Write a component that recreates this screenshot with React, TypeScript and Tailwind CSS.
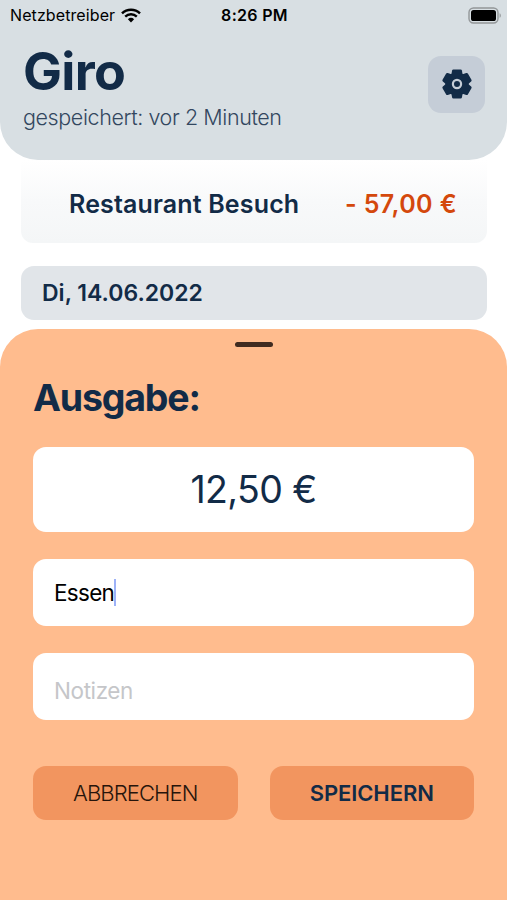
import { ReactNode } from "react";

const WifiIcon = () => (
  <svg width="20" height="15" viewBox="0 0 20 15" fill="none">
    <path d="M1 5.3a13 13 0 0 1 18 0" stroke="#000" strokeWidth="2.5" />
    <path d="M4.2 8.6a8.4 8.4 0 0 1 11.6 0" stroke="#000" strokeWidth="2.4" />
    <path d="M10 14.4 6.9 11.3a4.5 4.5 0 0 1 6.2 0Z" fill="#000" />
  </svg>
);

const BatteryIcon = () => (
  <svg width="34" height="17" viewBox="0 0 34 17" fill="none">
    <rect x="1" y="1" width="29" height="15" rx="4.5" stroke="#929698" strokeWidth="1.4" />
    <rect x="3" y="3" width="25" height="11" rx="2.6" fill="#000" />
    <path d="M31.6 6.2c1.6.6 1.6 4 0 4.6Z" fill="#929698" />
  </svg>
);

const teeth = [0, 60, 120];

const GearIcon = () => (
  <svg width="30" height="30" viewBox="-15 -15 30 30">
    <circle r="11.6" fill="#122b47" />
    {teeth.map((angle) => (
      <path
        key={angle}
        transform={`rotate(${angle})`}
        d="M-3.6-14.6h7.2q1.1 0 1.3 1.1L5.7-9V9L4.9 13.5q-.2 1.1-1.3 1.1h-7.2q-1.1 0-1.3-1.1L-5.7 9V-9L-4.9-13.5q.2-1.1 1.3-1.1Z"
        fill="#122b47"
      />
    ))}
    <circle r="4.1" fill="none" stroke="#c5cdd7" strokeWidth="2.2" />
  </svg>
);

const StatusBar = () => (
  <div className="grid grid-cols-3 items-center h-[30px] pl-2.5 pr-[5px] text-black">
    <div className="flex items-center gap-[6px]">
      <span className="text-base tracking-[0.1px]">Netzbetreiber</span>
      <WifiIcon />
    </div>
    <span className="-ml-[3px] text-base font-semibold text-center tracking-[0.3px]">8:26 PM</span>
    <div className="flex justify-end">
      <BatteryIcon />
    </div>
  </div>
);

const Field = ({ children }: { children: ReactNode }) => (
  <div className="flex items-center h-[67px] rounded-[13px] bg-white px-[21px] text-[22.5px]">
    {children}
  </div>
);

const App = () => {
  return (
    <div className="flex flex-col w-full h-[900px] overflow-hidden bg-white font-['Inter','Liberation_Sans',sans-serif] text-[#122b47]">
      <header className="h-[160px] shrink-0 rounded-b-[38px] bg-[#d8dfe3]">
        <StatusBar />
        <div className="flex justify-between pl-[23px] pr-[22px]">
          <div className="flex flex-col">
            <h1 className="mt-[10px] text-[52px] leading-[64px] font-bold tracking-[-0.7px]">Giro</h1>
            <p className="text-[21.5px] leading-[26px] font-light tracking-[-0.4px] text-[#33475f]">
              gespeichert: vor 2 Minuten
            </p>
          </div>
          <button className="flex items-center justify-center mt-[26px] pb-px size-[57px] rounded-[13px] bg-[#c5cdd7]">
            <GearIcon />
          </button>
        </div>
      </header>

      <main className="flex flex-col shrink-0 h-[169px] pl-[21px] pr-[20px]">
        <div className="flex items-center justify-between h-[83px] pt-[6px] pl-[48px] pr-[30px] rounded-b-[12px] bg-linear-to-b from-white via-[#f8f9fa] to-[#f4f6f7] text-[25px] font-semibold">
          <span className="tracking-[0.15px]">Restaurant Besuch</span>
          <span className="text-[#d4480c] tracking-[0.4px]">- 57,00 €</span>
        </div>
        <div className="flex items-center h-[54px] mt-[23px] pt-px px-[21px] rounded-[13px] bg-[#e1e5e9] text-[23px] font-semibold">
          <span>Di, 14.06.2022</span>
        </div>
      </main>

      <section className="flex flex-col flex-1 px-[33px] rounded-t-[38px] bg-[#ffbc8e]">
        <div className="self-center w-[38px] h-[5px] mt-[13px] rounded-full bg-[#402b20]" />
        <h2 className="mt-[28px] text-[37.5px] leading-[46px] font-bold tracking-[-1.2px]">Ausgabe:</h2>
        <div className="flex items-center justify-center h-[85px] mt-[26px] pt-px rounded-[13px] bg-white text-[37.5px] tracking-[-0.6px]">
          <span>12,50 €</span>
        </div>
        <div className="flex flex-col gap-[27px] mt-[27px]">
          <Field>
            <span className="text-black tracking-[-0.7px]">Essen</span>
            <span className="w-[2px] h-[27px] bg-[#9db2f8]" />
          </Field>
          <Field>
            <span className="mt-[8px] text-[#c5c6c9] tracking-[-0.4px]">Notizen</span>
          </Field>
        </div>
        <div className="grid grid-cols-2 gap-8 mt-[46px] text-[22px]">
          <button className="h-[54px] rounded-[13px] bg-[#f2955f] font-light tracking-[-0.9px] text-[#26140b]">
            <span>ABBRECHEN</span>
          </button>
          <button className="h-[54px] rounded-[13px] bg-[#f2955f] font-semibold tracking-[-0.1px]">
            <span>SPEICHERN</span>
          </button>
        </div>
      </section>
    </div>
  );
};

export default App;
